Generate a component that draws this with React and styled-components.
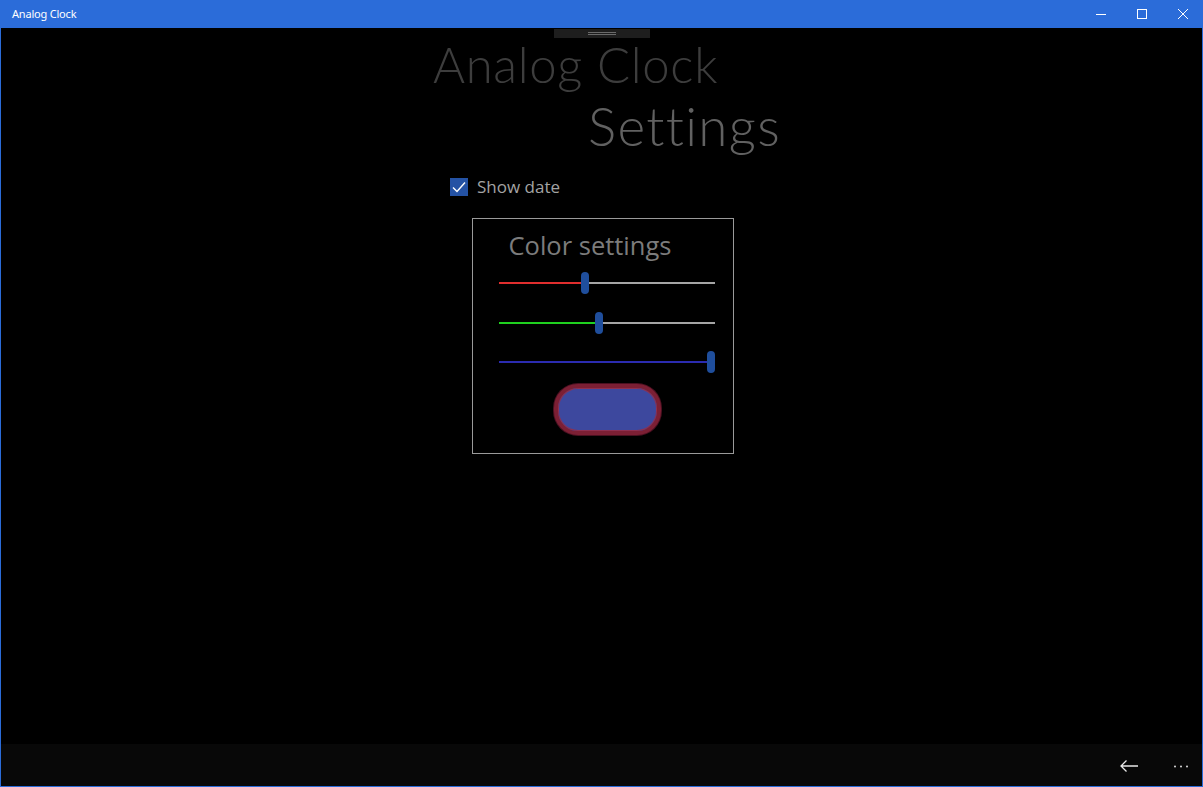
import React from "react";
import styled, { createGlobalStyle } from "styled-components";

const Global = createGlobalStyle`
  html, body { margin: 0; padding: 0; background: #000; }
  body { font-family: "Open Sans", "Noto Sans", sans-serif; }
  * { box-sizing: border-box; }
`;

const Window = styled.div`
  width: 1203px;
  height: 787px;
  display: flex;
  flex-direction: column;
  background: #2b6cd9;
  padding: 0 1px 1px 1px;
`;

const TitleBar = styled.div`
  height: 28px;
  display: flex;
  align-items: center;
  background: #2b6cd9;
  margin: 0 -1px;
`;

const TitleText = styled.div`
  flex: 1;
  padding-left: 12px;
  color: #fff;
  font-family: "Noto Sans", "Open Sans", sans-serif;
  font-size: 11px;
  letter-spacing: -0.2px;
  line-height: 1;
  margin-top: -1px;
`;

const CaptionButton = styled.div`
  width: 41px;
  height: 28px;
  display: flex;
  align-items: center;
  justify-content: center;
`;

const Content = styled.div`
  flex: 1;
  background: #000;
  display: flex;
  flex-direction: column;
  align-items: center;
`;

const Handle = styled.div`
  width: 96px;
  height: 9px;
  margin-top: 1px;
  background: #1e1e1e;
  display: flex;
  flex-direction: column;
  align-items: center;
  justify-content: center;
  gap: 1px;
`;

const HandleLine = styled.div`
  width: 28px;
  height: 1px;
  background: #6a6a6a;
`;

const Column = styled.div`
  width: 348px;
  margin-left: 11px;
  display: flex;
  flex-direction: column;
`;

const Heading = styled.div`
  font-family: "Lato", "Open Sans", sans-serif;
  font-weight: 300;
  font-size: ${(p) => p.size}px;
  letter-spacing: ${(p) => p.ls}px;
  line-height: 1.1;
  color: ${(p) => p.color};
  align-self: ${(p) => p.align};
  margin-top: ${(p) => p.mt}px;
  white-space: nowrap;
`;

const CheckRow = styled.label`
  display: flex;
  align-items: center;
  gap: 9px;
  margin: 23px 0 0 17px;
`;

const CheckBox = styled.div`
  width: 18px;
  height: 18px;
  background: #2452a4;
  display: flex;
  align-items: center;
  justify-content: center;
`;

const CheckLabel = styled.span`
  font-size: 17px;
  line-height: 18px;
  color: #a3a3a3;
  font-family: "Open Sans", sans-serif;
`;

const Panel = styled.div`
  align-self: center;
  margin: 22px 0 0 -9px;
  width: 262px;
  height: 236px;
  border: 1px solid #9a9a9a;
  display: flex;
  flex-direction: column;
  padding: 14px 0 0 26px;
`;

const PanelTitle = styled.div`
  font-family: "Open Sans", sans-serif;
  font-size: 25.5px;
  color: #7c7c7c;
  line-height: 1;
  padding-left: 10px;
`;

const SliderWrap = styled.div`
  position: relative;
  width: 216px;
  height: 22px;
  margin-top: ${(p) => p.mt}px;
  display: flex;
  align-items: center;
`;

const Track = styled.div`
  height: 2px;
  width: 100%;
  background: linear-gradient(
    to right,
    ${(p) => p.color} 0,
    ${(p) => p.color} ${(p) => p.pct}%,
    ${(p) => p.rest} ${(p) => p.pct}%,
    ${(p) => p.rest} 100%
  );
`;

const Thumb = styled.div`
  position: absolute;
  top: 0;
  width: 8px;
  height: 22px;
  border-radius: 4px;
  background: #1f4e9c;
`;

const ColorButton = styled.button`
  align-self: flex-start;
  margin: 11px 0 0 55px;
  width: 107px;
  height: 51px;
  border-radius: 24px;
  background: #3d489e;
  border: 4px solid #7c1f34;
  box-shadow: inset 0 0 0 1px #8e3050, 0 0 0 1px #4a1020;
  padding: 0;
`;

const AppBar = styled.div`
  height: 42px;
  background: #080808;
  display: flex;
  align-items: center;
  justify-content: flex-end;
  padding: 2px 14px 0 0;
  gap: 36px;
`;

const BarButton = styled.div`
  display: flex;
  align-items: center;
  justify-content: center;
`;

function Slider({ color, rest, value, mt }) {
  const left = value * (216 - 8);
  return (
    <SliderWrap mt={mt}>
      <Track color={color} rest={rest} pct={((left + 4) / 216) * 100} />
      <Thumb style={{ left: `${left}px` }} />
    </SliderWrap>
  );
}

export default function App() {
  return (
    <>
      <Global />
      <Window>
        <TitleBar>
          <TitleText>Analog Clock</TitleText>
          <CaptionButton>
            <svg width="10" height="10" viewBox="0 0 10 10">
              <path d="M0 5.5H10" stroke="#fff" strokeWidth="1" />
            </svg>
          </CaptionButton>
          <CaptionButton>
            <svg width="10" height="10" viewBox="0 0 10 10">
              <rect x="0.5" y="0.5" width="9" height="9" fill="none" stroke="#fff" strokeWidth="1" />
            </svg>
          </CaptionButton>
          <CaptionButton>
            <svg width="10" height="10" viewBox="0 0 10 10">
              <path d="M0 0L10 10M10 0L0 10" stroke="#fff" strokeWidth="1" />
            </svg>
          </CaptionButton>
        </TitleBar>
        <Content>
          <Handle>
            <HandleLine />
            <HandleLine />
          </Handle>
          <Column>
            <Heading size={49} ls={0.7} color="#3d3d3d" align="flex-start" mt={0}>
              Analog Clock
            </Heading>
            <Heading size={53} ls={1.3} color="#616161" align="flex-end" mt={5}>
              Settings
            </Heading>
            <CheckRow>
              <CheckBox>
                <svg width="14" height="12" viewBox="0 0 14 12">
                  <path d="M1 6.5L5 10.5L13 1.5" fill="none" stroke="#fff" strokeWidth="1.4" />
                </svg>
              </CheckBox>
              <CheckLabel>Show date</CheckLabel>
            </CheckRow>
            <Panel>
              <PanelTitle>Color settings</PanelTitle>
              <Slider color="#e02e2e" rest="#a5a5a5" value={0.399} mt={13} />
              <Slider color="#1fd11f" rest="#a5a5a5" value={0.466} mt={18} />
              <Slider color="#2b2bb0" rest="#2b2bb0" value={1} mt={17} />
              <ColorButton aria-label="color" />
            </Panel>
          </Column>
        </Content>
        <AppBar>
          <BarButton>
            <svg width="18" height="12" viewBox="0 0 18 12">
              <path d="M1 6H18M6.5 0.5L1 6L6.5 11.5" fill="none" stroke="#e8e8e8" strokeWidth="1.3" />
            </svg>
          </BarButton>
          <BarButton>
            <svg width="14" height="3" viewBox="0 0 14 3">
              <circle cx="1" cy="1.5" r="1" fill="#dcdcdc" />
              <circle cx="7" cy="1.5" r="1" fill="#dcdcdc" />
              <circle cx="13" cy="1.5" r="1" fill="#dcdcdc" />
            </svg>
          </BarButton>
        </AppBar>
      </Window>
    </>
  );
}
